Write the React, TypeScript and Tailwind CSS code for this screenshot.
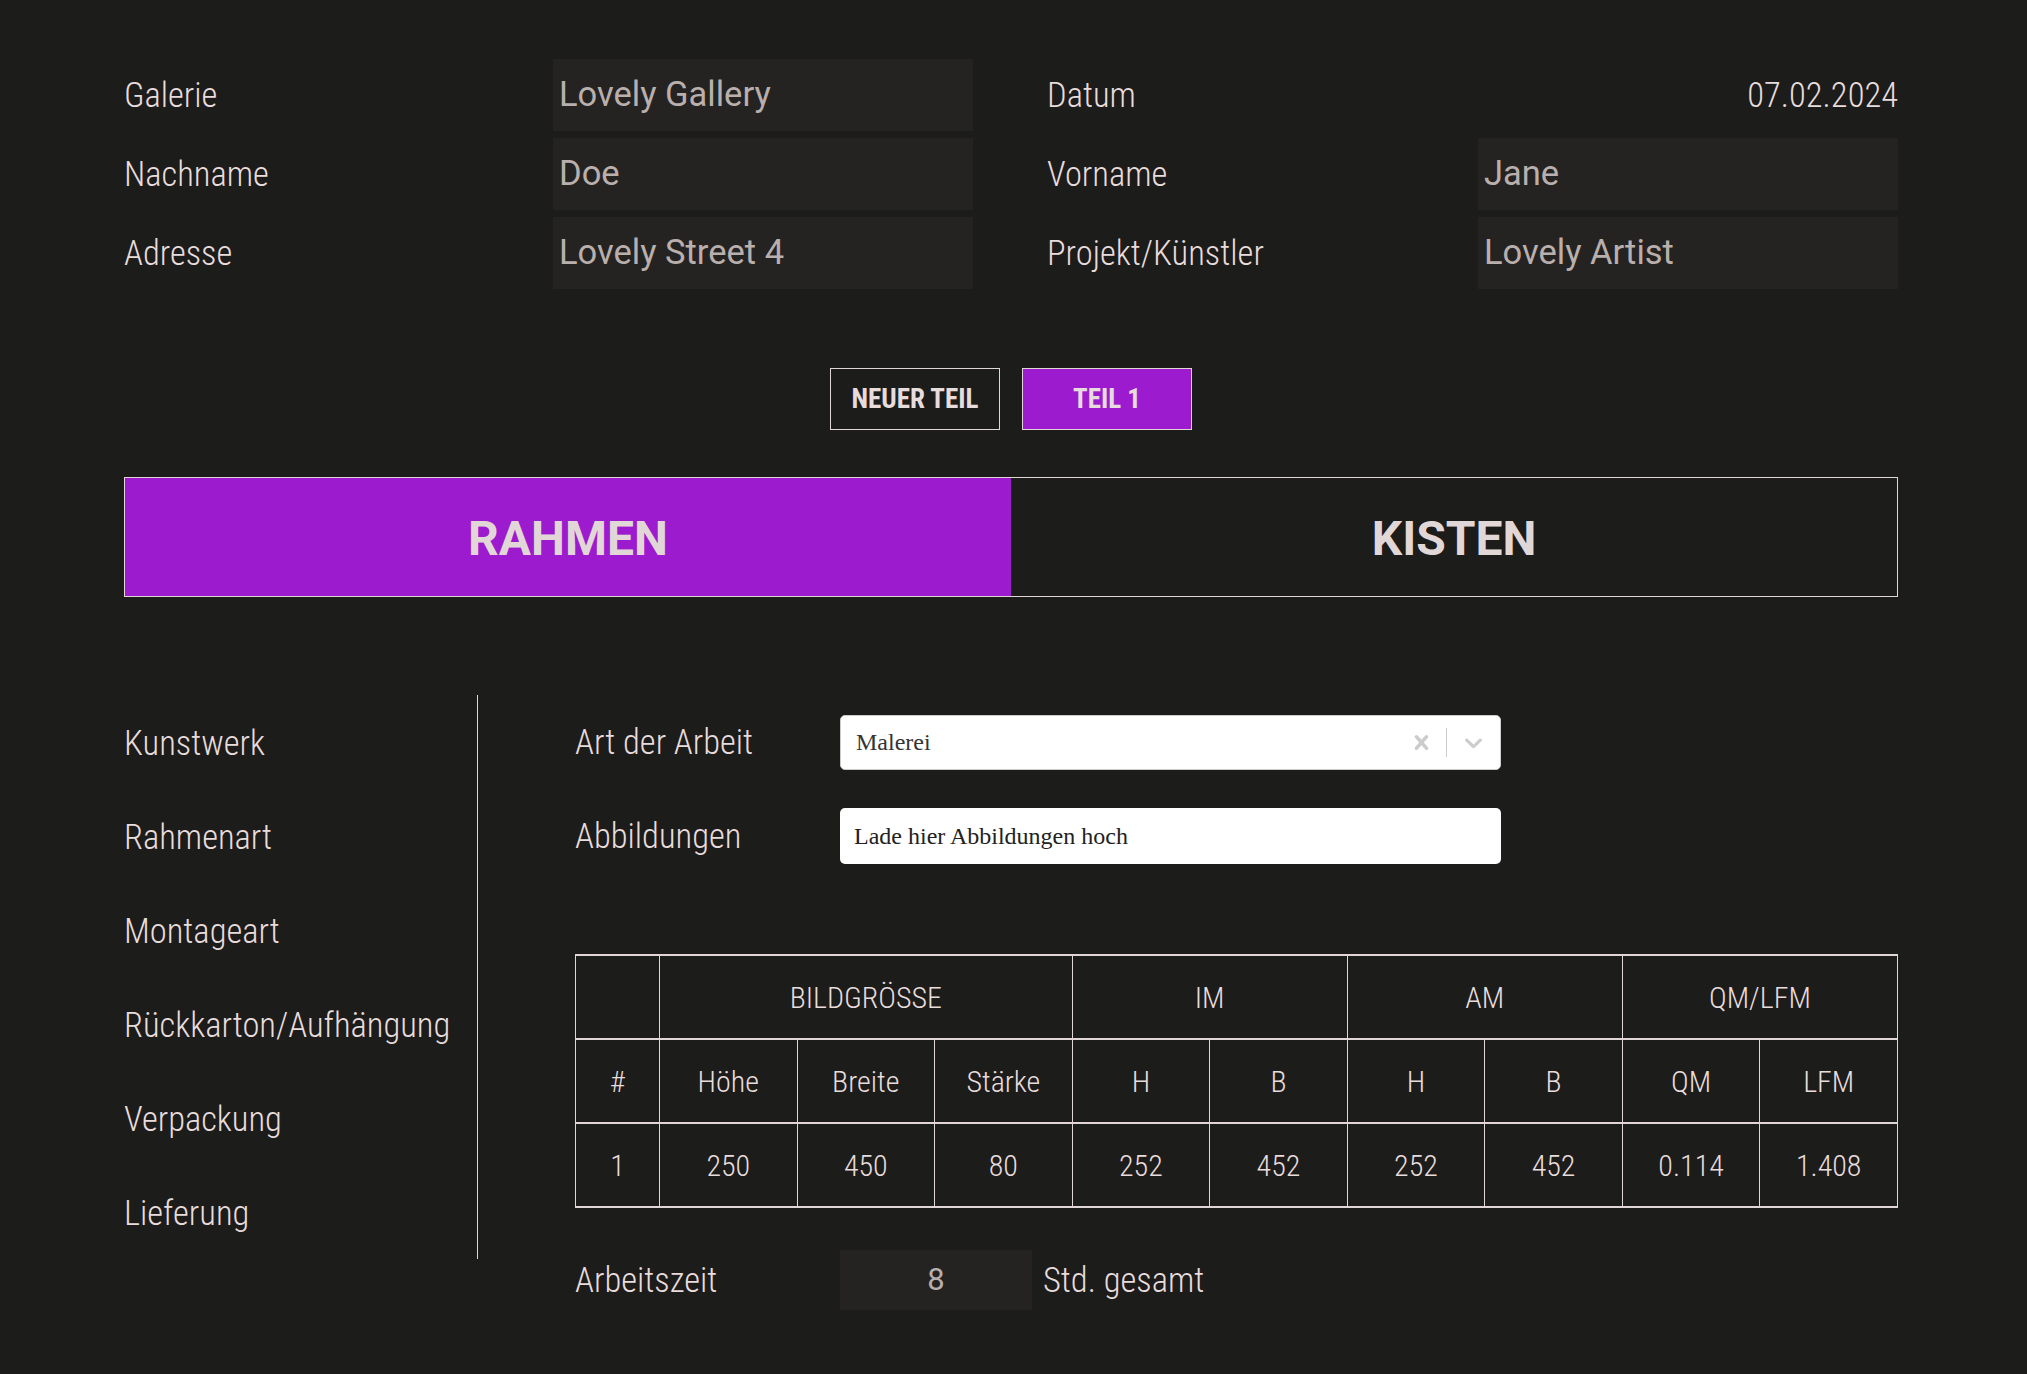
import React from "react";

const labelCls = "flex items-center pt-[2px] text-[34.5px] font-light";
const boxCls =
  "h-[72px] bg-[#252322] pl-[6px] flex items-center font-[Roboto,sans-serif] font-stretch-normal text-[34.5px] font-normal text-[#b9afad]";

const sidebar = [
  "Kunstwerk",
  "Rahmenart",
  "Montageart",
  "Rückkarton/Aufhängung",
  "Verpackung",
  "Lieferung",
];

const cellCls =
  "border-x border-y-2 border-[#e0d6d6] text-center align-middle text-[30px] font-light h-[84px]";

const CrossIcon = () => (
  <svg viewBox="0 0 20 20" width="29" height="29" fill="#cccccc">
    <path d="M14.348 14.849c-0.469 0.469-1.229 0.469-1.697 0l-2.651-3.030-2.651 3.029c-0.469 0.469-1.229 0.469-1.697 0-0.469-0.469-0.469-1.229 0-1.697l2.758-3.15-2.759-3.152c-0.469-0.469-0.469-1.228 0-1.697s1.228-0.469 1.697 0l2.652 3.031 2.651-3.031c0.469-0.469 1.228-0.469 1.697 0s0.469 1.229 0 1.697l-2.758 3.152 2.758 3.15c0.469 0.469 0.469 1.229 0 1.698z" />
  </svg>
);

const ChevronIcon = () => (
  <svg viewBox="0 0 20 20" width="29" height="29" fill="#cccccc">
    <path d="M4.516 7.548c0.436-0.446 1.043-0.481 1.576 0l3.908 3.747 3.908-3.747c0.533-0.481 1.141-0.446 1.574 0 0.436 0.445 0.408 1.197 0 1.615-0.406 0.418-4.695 4.502-4.695 4.502-0.217 0.223-0.502 0.335-0.787 0.335s-0.57-0.112-0.789-0.335c0 0-4.287-4.084-4.695-4.502s-0.436-1.17 0-1.615z" />
  </svg>
);

export default function App() {
  return (
    <div className="min-h-screen bg-[#1c1c1b] text-[#e8dcdc] font-['Roboto_Condensed',Roboto,sans-serif] font-stretch-condensed pt-[59px] pl-[124px] pb-[60px]">
      <div className="w-[1774px]">
        {/* Kopfdaten */}
        <div className="flex gap-[74px]">
          <div className="grid grid-cols-[429px_420px] gap-y-[7px]">
            <div className={labelCls}>Galerie</div>
            <div className={boxCls}>Lovely Gallery</div>
            <div className={labelCls}>Nachname</div>
            <div className={boxCls}>Doe</div>
            <div className={labelCls}>Adresse</div>
            <div className={boxCls}>Lovely Street 4</div>
          </div>
          <div className="grid grid-cols-[431px_420px] gap-y-[7px]">
            <div className={labelCls}>Datum</div>
            <div className="h-[72px] flex items-center justify-end pt-[2px] text-[34.5px] font-light">
              07.02.2024
            </div>
            <div className={labelCls}>Vorname</div>
            <div className={boxCls}>Jane</div>
            <div className={labelCls}>Projekt/Künstler</div>
            <div className={boxCls}>Lovely Artist</div>
          </div>
        </div>

        {/* Teile */}
        <div className="mt-[79px] flex justify-center gap-[22px]">
          <button className="w-[170px] h-[62px] border border-[#e0d6d6] text-[27px] font-bold text-[#e6dcdc]">
            NEUER TEIL
          </button>
          <button className="w-[170px] h-[62px] border border-[#e0d6d6] bg-[#9d1bce] text-[27px] font-bold text-[#e6dcdc]">
            TEIL 1
          </button>
        </div>

        {/* Tabs */}
        <div className="mt-[47px] h-[120px] border border-[#e0d6d6] flex font-[Roboto,sans-serif] font-stretch-normal">
          <div className="flex-1 bg-[#9d1bce] flex items-center justify-center pt-[4px] text-[48px] font-bold text-[#e2d7d7]">
            RAHMEN
          </div>
          <div className="flex-1 flex items-center justify-center pt-[4px] text-[48px] font-bold text-[#e2d7d7]">
            KISTEN
          </div>
        </div>

        {/* Inhalt */}
        <div className="mt-[98px] flex items-start">
          <div className="w-[354px] border-r border-[#e0d6d6]">
            {sidebar.map((s) => (
              <div key={s} className="h-[94px] flex items-center pt-[3px] text-[34.5px] font-light">
                {s}
              </div>
            ))}
          </div>

          <div className="ml-[97px] flex-1">
            <div className="h-[94px] flex items-center">
              <div className="w-[265px] pt-[2px] text-[34.5px] font-light">Art der Arbeit</div>
              <div className="w-[661px] h-[55px] bg-white rounded-[5px] border border-[#cccccc] flex items-center font-['Liberation_Serif',serif] text-[24px] text-[#333333]">
                <div className="flex-1 pl-[15px]">Malerei</div>
                <div className="flex items-center pr-[8px]">
                  <div className="px-[4px]">
                    <CrossIcon />
                  </div>
                  <div className="w-px h-[29px] bg-[#cccccc] ml-[6px] mr-[8px]" />
                  <div className="px-[4px]">
                    <ChevronIcon />
                  </div>
                </div>
              </div>
            </div>
            <div className="h-[94px] flex items-center">
              <div className="w-[265px] pt-[2px] text-[34.5px] font-light">Abbildungen</div>
              <div className="w-[661px] h-[56px] bg-white rounded-[5px] flex items-center pl-[14px] font-['Liberation_Serif',serif] text-[24px] text-[#222222]">
                Lade hier Abbildungen hoch
              </div>
            </div>

            <table className="mt-[71px] w-full table-fixed border-collapse">
              <colgroup>
                <col className="w-[84px]" />
                {Array.from({ length: 9 }).map((_, i) => (
                  <col key={i} />
                ))}
              </colgroup>
              <tbody>
                <tr>
                  <td className={cellCls}></td>
                  <td colSpan={3} className={cellCls}>BILDGRÖSSE</td>
                  <td colSpan={2} className={cellCls}>IM</td>
                  <td colSpan={2} className={cellCls}>AM</td>
                  <td colSpan={2} className={cellCls}>QM/LFM</td>
                </tr>
                <tr>
                  {["#", "Höhe", "Breite", "Stärke", "H", "B", "H", "B", "QM", "LFM"].map((h, i) => (
                    <td key={i} className={cellCls}>{h}</td>
                  ))}
                </tr>
                <tr>
                  {["1", "250", "450", "80", "252", "452", "252", "452", "0.114", "1.408"].map((v, i) => (
                    <td key={i} className={cellCls}>{v}</td>
                  ))}
                </tr>
              </tbody>
            </table>

            <div className="mt-[42px] h-[60px] flex items-center">
              <div className="w-[265px] pt-[2px] text-[34.5px] font-light">Arbeitszeit</div>
              <div className="w-[192px] h-[60px] bg-[#252322] flex items-center justify-center font-[Roboto,sans-serif] font-stretch-normal text-[31px] font-normal text-[#b9afad]">
                8
              </div>
              <div className="ml-[11px] pt-[2px] text-[34.5px] font-light">Std. gesamt</div>
            </div>
          </div>
        </div>
      </div>
    </div>
  );
}
